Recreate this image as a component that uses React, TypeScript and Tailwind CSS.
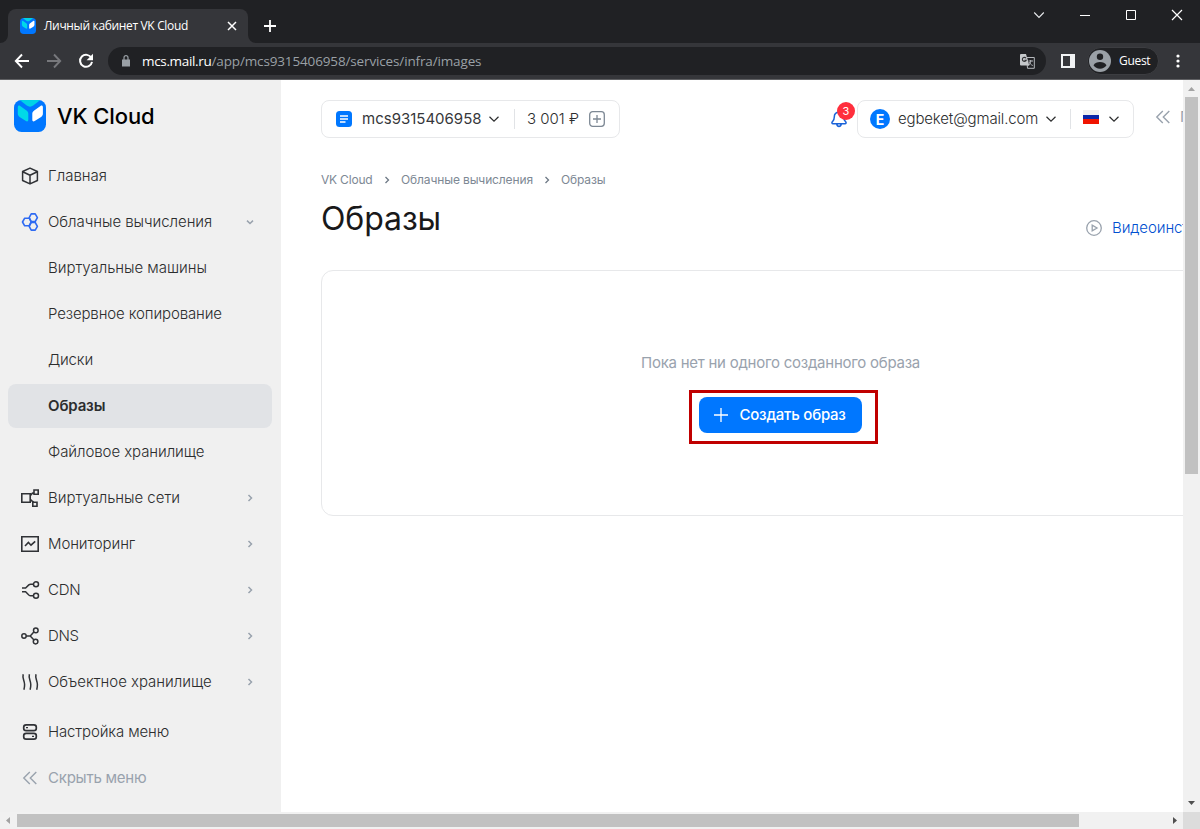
import React from "react";

type IconProps = { className?: string };

function Logo({ className }: IconProps) {
  return (
    <svg viewBox="0 0 32 32" className={className}>
      <rect width="32" height="32" rx="7.5" fill="#0077ff" />
      <path d="M6 .3C8 0 10 0 12 0h8c2 0 4 0 6 .3l-6.8 5.3c-2 1.500-4.400 1.500-6.400 0Z" fill="#00d3e6" />
      <path d="M3.800 7.200c0-1.600 1.300-2.100 2.400-1.200l6.300 4.400c1.200.9 1.800 1.900 1.800 3.200v6.200c0 1.600-1.200 2-2.400 1.200l-5.900-3.700c-1.500-1-2.200-2-2.200-3.700Z" fill="#00d9e8" />
      <path d="M28.900 7.200c0-1.600-1.300-2.100-2.400-1.200l-6.300 4.400c-1.200.9-1.900 1.900-1.900 3.200v6.200c0 1.600 1.200 2 2.400 1.200l6-3.700c1.500-1 2.200-2 2.200-3.700Z" fill="#fff" />
    </svg>
  );
}

function Chevron({ className }: IconProps) {
  return (
    <svg viewBox="0 0 12 12" fill="none" stroke="currentColor" strokeWidth="1.200" className={className}>
      <path d="M1.500 3.800 6 8.200l4.500-4.400" />
    </svg>
  );
}

function SmallChevron({ open }: { open?: boolean }) {
  return (
    <svg viewBox="0 0 16 16" fill="none" stroke="#99a2ad" strokeWidth="1.500" className="size-4">
      {open ? <path d="m5 6.600 3 2.900 3-2.900" /> : <path d="m6.500 5 3 3-3 3" />}
    </svg>
  );
}

function DoubleLeft({ className }: IconProps) {
  return (
    <svg viewBox="0 0 20 20" fill="none" stroke="#99a2ad" strokeWidth="1.400" className={className}>
      <path d="m9.800 4-6 6 6 6M16.300 4l-6 6 6 6" />
    </svg>
  );
}

function NavIcon({ name }: { name: string }) {
  const shapes: Record<string, React.ReactNode> = {
    cube: (
      <path d="M10 2.100 17.400 5.500v9L10 17.900l-7.400-3.400v-9ZM2.700 5.800 10 9.300l7.300-3.500M10 9.300v8.400" strokeLinejoin="round" strokeWidth="1.500" />
    ),
    hex: (
      <g stroke="#2f6bf2" strokeWidth="1.600" strokeLinejoin="round">
        <path d="M11.200 1.900h4l2.200 3.700-2.200 3.900h-4L9.200 5.600Z" />
        <path d="M11.200 10.500h4l2.200 3.800-2.200 3.800h-4l-2-3.800Z" />
        <path d="M9.200 6.200H4.700L2.500 10l2.200 3.800h4.500M9.200 13.600l2-3.600-2-3.800" />
      </g>
    ),
    nets: (
      <path d="M1.800 5.700h8.400v8.500H1.800ZM14 2h4.200v4.200H14ZM12.800 14.300H17v4h-4.200ZM10.200 7.600 12.400 5.200 14 4.800M10.200 11.300l2 1.800 1.600 1.100" strokeWidth="1.600" />
    ),
    monitor: <path d="M1.800 2.800h16.400v14.400H1.800ZM5 12l3.400-3.500 2.600 2.700 4.200-3.800" strokeWidth="1.600" />,
    cdn: (
      <>
        <circle cx="16" cy="4.200" r="2.500" />
        <circle cx="16" cy="15.800" r="2.500" />
        <path d="M2 8h3.600l3.200-3.100c.6-.5 1-.7 1.800-.7h2.900M2 11.800h3.600l3.200 3.200c.6.500 1 .8 1.800.8h2.900" />
      </>
    ),
    dns: (
      <>
        <circle cx="4" cy="10" r="2.200" />
        <circle cx="15.800" cy="4.400" r="2.300" />
        <circle cx="15.600" cy="15.600" r="2.300" />
        <path d="M6.200 10h4l3.900-4.200M10.200 10l3.800 4" />
      </>
    ),
    waves: (
      <path d="M3.200 2.200c-1.200 4.200 1.400 6.400 1.400 10.300 0 2.100-.2 3.600-.7 5.300M9.400 2.200c-1.200 4.200 1.400 6.400 1.400 10.300 0 2.100-.2 3.600-.7 5.300M16 2.200c-1.200 4.200 1.400 6.400 1.400 10.300 0 2.100-.2 3.600-.7 5.300" />
    ),
    settings: (
      <g strokeWidth="1.700">
        <rect x="3.700" y="2.800" width="12.600" height="5.900" rx="2.400" />
        <rect x="3.700" y="11.300" width="12.600" height="5.900" rx="2.400" />
        <path d="M6 5.700h2M12 14.400h2" strokeWidth="1.300" />
      </g>
    ),
  };
  return (
    <svg viewBox="0 0 20 20" fill="none" stroke="#303236" strokeWidth="1.500" className="size-5 shrink-0">
      {shapes[name]}
    </svg>
  );
}

type Item = { label: string; icon?: string; arrow?: "open" | "closed"; active?: boolean; tracking: string };

const items: Item[] = [
  { label: "Главная", icon: "cube", tracking: "" },
  { label: "Облачные вычисления", icon: "hex", arrow: "open", tracking: "tracking-[-0.050px]" },
  { label: "Виртуальные машины", tracking: "tracking-[-0.030px]" },
  { label: "Резервное копирование", tracking: "tracking-[-0.130px]" },
  { label: "Диски", tracking: "tracking-[-0.200px]" },
  { label: "Образы", active: true, tracking: "tracking-[-0.150px]" },
  { label: "Файловое хранилище", tracking: "tracking-[-0.080px]" },
  { label: "Виртуальные сети", icon: "nets", arrow: "closed", tracking: "tracking-[-0.030px]" },
  { label: "Мониторинг", icon: "monitor", arrow: "closed", tracking: "tracking-[-0.100px]" },
  { label: "CDN", icon: "cdn", arrow: "closed", tracking: "tracking-[-0.200px]" },
  { label: "DNS", icon: "dns", arrow: "closed", tracking: "tracking-[-0.300px]" },
  { label: "Объектное хранилище", icon: "waves", arrow: "closed", tracking: "tracking-[-0.030px]" },
];

function NavItem({ item }: { item: Item }) {
  return (
    <a
      className={
        "flex h-11 shrink-0 items-center gap-2 rounded-lg pl-3 pr-3.5 " +
        (item.active ? "bg-[#e1e3e6] font-semibold" : "font-light")
      }
    >
      {item.icon ? <NavIcon name={item.icon} /> : <span className="w-5" />}
      <span className={"flex-1 whitespace-nowrap " + item.tracking}>{item.label}</span>
      {item.arrow && <SmallChevron open={item.arrow === "open"} />}
    </a>
  );
}

function BrowserChrome() {
  return (
    <header className="flex h-20 shrink-0 flex-col border-b border-[#5f6063] bg-[#35363a] font-['Open_Sans',sans-serif] text-white">
      <div className="flex h-[43px] items-end bg-[#202124]">
        <svg viewBox="0 0 8 8" className="size-2"><path d="M8 0v8H0a8 8 0 0 0 8-8Z" fill="#35363a" /></svg>
        <div className="flex h-[34px] w-60 items-center rounded-t-lg bg-[#35363a] pl-3 pr-[11px]">
          <Logo className="size-4" />
          <span className="ml-2 flex-1 whitespace-nowrap text-[12px] tracking-[-0.340px]">Личный кабинет VK Cloud</span>
          <svg viewBox="0 0 10 10" className="size-2.5" stroke="#fff" strokeWidth="1.500"><path d="m1 1 8 8M9 1 1 9" /></svg>
        </div>
        <svg viewBox="0 0 8 8" className="size-2"><path d="M0 0v8h8a8 8 0 0 1-8-8Z" fill="#35363a" /></svg>
        <svg viewBox="0 0 12 12" className="mb-[11px] ml-2 size-3" stroke="#fff" strokeWidth="1.800"><path d="M6 0v12M0 6h12" /></svg>
        <div className="mb-[22px] ml-auto mr-[17px] flex items-center gap-9">
          <svg viewBox="0 0 12 12" className="-mr-px size-3" fill="none" stroke="#e8eaed" strokeWidth="1.100"><path d="m1.200 3.500 4.800 5 4.800-5" /></svg>
          <svg viewBox="0 0 10 10" className="size-2.5" stroke="#fff"><path d="M0 5.500h10" /></svg>
          <svg viewBox="0 0 10 10" className="size-2.5" fill="none" stroke="#fff"><path d="M.5.5h9v9h-9Z" /></svg>
          <svg viewBox="0 0 12 12" className="-ml-px size-3" stroke="#fff" strokeWidth="1.200"><path d="m1 1 10 10M11 1 1 11" /></svg>
        </div>
      </div>
      <div className="flex h-9 items-center pl-3.5">
        <svg viewBox="0 0 16 16" className="size-4" fill="none" stroke="#fff" strokeWidth="1.900"><path d="M15 8H2M8 1.500 1.800 8 8 14.500" /></svg>
        <svg viewBox="0 0 16 16" className="ml-4 size-4" fill="none" stroke="#77787c" strokeWidth="1.900"><path d="M1 8h13M8 1.500 14.200 8 8 14.500" /></svg>
        <svg viewBox="0 0 16 16" className="ml-4 size-4" fill="none" stroke="#fff" strokeWidth="2"><path d="M13.400 5A6 6 0 1 0 14 8.900" /><path d="M15 .8v6.400H8.600Z" fill="#fff" stroke="none" /></svg>
        <div className="ml-3.5 flex h-7 w-[938px] items-center rounded-full bg-[#202124] pl-3.5 pr-[11px]">
          <svg viewBox="0 0 8 12" className="h-3 w-2" fill="none" stroke="#9aa0a6"><path d="M0 4.500h8V11.500H0Z" fill="#9aa0a6" stroke="none" /><path d="M2 5V2.700a2 2 0 0 1 4 0V5" strokeWidth="1.200" /></svg>
          <span className="ml-3 flex-1 whitespace-nowrap text-[13.500px] tracking-[-0.140px] text-[#9aa0a6]">
            <span className="tracking-[-0.330px] text-white">mcs.mail.ru</span>/app/mcs9315406958/services/infra/images
          </span>
          <svg viewBox="0 0 15 15" className="size-[15px]" fill="none">
            <path d="M6.500 3.500h7.800v10.800H7.500Z" stroke="#b5b8bc" />
            <path d="M8.500 7h4.500M10.700 6v1c0 2-1 3.500-2.200 4.500M9 8c.8 1.600 2 2.800 3.800 3.500" stroke="#b5b8bc" />
            <path d="M1 0h5l3.300 11.500H1a1 1 0 0 1-1-1V1a1 1 0 0 1 1-1Z" fill="#c4c7ca" />
            <path d="M6 4.200a2 2 0 1 0 .2 2H4.500" stroke="#303134" strokeWidth="1.100" />
          </svg>
        </div>
        <svg viewBox="0 0 14 14" className="ml-[15px] size-3.5"><path d="M0 0h14v14H0ZM2 2v10h7V2Z" fill="#f1f3f4" fillRule="evenodd" /></svg>
        <div className="ml-3 flex h-7 w-[72px] items-center rounded-full border border-[#3c3d41] bg-[#202124] pl-px">
          <svg viewBox="0 0 22 22" className="size-[22px]"><circle cx="11" cy="11" r="11" fill="#9aa0a6" /><circle cx="11" cy="6.700" r="3.200" fill="#202124" /><path d="M4.500 15.200c1.300-2.200 3.700-3.300 6.500-3.300s5.200 1.100 6.500 3.300c-1.500 2.200-3.700 3.500-6.500 3.500s-5-1.300-6.500-3.500Z" fill="#202124" /></svg>
          <span className="ml-2 text-[12px] tracking-[-0.300px]">Guest</span>
        </div>
        <svg viewBox="0 0 4 14" className="ml-[17px] h-3.5 w-1" fill="#fff"><circle cx="2" cy="2" r="1.600" /><circle cx="2" cy="7" r="1.600" /><circle cx="2" cy="12" r="1.600" /></svg>
      </div>
    </header>
  );
}

function Sidebar() {
  return (
    <aside className="flex w-[281px] shrink-0 flex-col bg-[#f0f0f0] px-2 pt-5 text-[15px] text-[#2c2d2e]">
      <div className="flex h-8 items-center pl-1.5">
        <Logo className="size-8" />
        <span className="ml-[11px] whitespace-nowrap text-[22px] font-medium tracking-[-0.100px] text-black">VK Cloud</span>
      </div>
      <nav className="mt-[22px] flex w-[264px] flex-col gap-0.5">
        {items.map((item) => (
          <NavItem key={item.label} item={item} />
        ))}
      </nav>
      <div className="mt-1.5 flex w-[264px] flex-col gap-0.5 font-light">
        <a className="flex h-11 items-center gap-2 pl-3">
          <NavIcon name="settings" />
          <span className="tracking-[-0.130px]">Настройка меню</span>
        </a>
        <a className="flex h-11 items-center gap-2 pl-3 font-normal text-[#99a2ad]">
          <DoubleLeft className="size-5" />
          <span className="tracking-[-0.230px]">Скрыть меню</span>
        </a>
      </div>
    </aside>
  );
}

function TopBar() {
  return (
    <div className="flex h-[38px] items-center whitespace-nowrap text-[15px] text-[#2c2d2e]">
      <div className="flex h-[38px] w-[299px] shrink-0 items-center rounded-lg border border-[#e7e8ea] pl-3.5">
        <svg viewBox="0 0 16 16" className="size-4"><rect width="16" height="16" rx="3.500" fill="#0077ff" /><path d="M4 5h8M4 8h8M4 11h5.500" stroke="#fff" strokeWidth="1.300" /></svg>
        <span className="ml-2.5 w-[126px] text-[#36373a]">mcs9315406958</span>
        <Chevron className="size-3" />
        <span className="ml-3.5 h-5 w-px bg-[#e1e3e6]" />
        <span className="ml-3 w-[62px] font-light">3 001 ₽</span>
        <svg viewBox="0 0 16 16" className="size-4" fill="none" stroke="#7d8894" strokeWidth="1.300"><rect x=".7" y=".7" width="14.600" height="14.600" rx="3" /><path d="M8 4v8M4 8h8" /></svg>
      </div>
      <div className="relative ml-[210px] size-[18px] shrink-0">
        <svg viewBox="0 0 18 18" className="size-[18px]" fill="none" stroke="#1a63d9" strokeWidth="1.500" strokeLinejoin="round"><path d="M9 2.200c-3 0-4.700 2.200-4.700 4.800 0 3-1 3.700-2 4.800-.8 1-.3 1.900.7 1.900h12c1 0 1.500-.9.700-1.900-1-1.100-2-1.800-2-4.800 0-2.600-1.700-4.800-4.700-4.800ZM6.700 14c.3 1.500 1.200 2.400 2.300 2.400s2-.9 2.300-2.400" /></svg>
        <span className="absolute -top-2 left-[7px] flex size-[18px] items-center justify-center rounded-full bg-[#ff2f3d] text-[11px] text-white">3</span>
      </div>
      <div className="ml-[9px] flex h-[38px] w-[277px] shrink-0 items-center rounded-lg border border-[#e7e8ea] pl-3">
        <span className="flex size-5 items-center justify-center rounded-full bg-[#0077ff] text-[14px] font-bold text-white">E</span>
        <span className="ml-2 w-[147px] font-light tracking-[-0.150px]">egbeket@gmail.com</span>
        <Chevron className="size-3" />
        <span className="ml-[13px] h-5 w-px bg-[#e1e3e6]" />
        <span className="mb-1 ml-3 flex h-3.5 w-4 flex-col"><span className="h-[5px] bg-[#f0f0f0]" /><span className="h-1 bg-[#0a26a8]" /><span className="h-[5px] bg-[#f01400]" /></span>
        <Chevron className="ml-[9px] size-3" />
      </div>
      <DoubleLeft className="-mt-1 ml-[19px] size-5 shrink-0" />
      <span className="-mt-1 ml-[7px] text-[15px] text-[#99a2ad]">Помощь</span>
    </div>
  );
}

function CrumbArrow() {
  return (
    <svg viewBox="0 0 8 8" className="size-2" fill="none" stroke="#6d7885" strokeWidth="1.300"><path d="m2.500 1 3 3-3 3" /></svg>
  );
}

function Page() {
  return (
    <main className="min-w-0 flex-1 overflow-hidden bg-white pl-10 pt-5">
      <div className="flex w-[919px] flex-col">
        <TopBar />
        <div className="mt-8 flex h-5 items-center whitespace-nowrap text-[12px] tracking-[-0.130px] text-[#7d8894]">
          <span className="w-[62px] tracking-[-0.200px]">VK Cloud</span>
          <CrumbArrow />
          <span className="ml-2.5 w-[142px]">Облачные вычисления</span>
          <CrumbArrow />
          <span className="ml-2.5">Образы</span>
        </div>
        <div className="flex h-20 items-start justify-between">
          <h1 className="mt-[7px] text-[32px] leading-[44px] tracking-[-0.100px] text-[#19191a]">Образы</h1>
          <a className="mt-[27px] flex w-[154px] items-center whitespace-nowrap text-[15px] leading-[22px] font-light tracking-[-0.100px] text-[#0050d0]">
            <svg viewBox="0 0 16 16" className="mr-[10px] size-4 shrink-0" fill="none" stroke="#99a2ad" strokeWidth="1.300"><circle cx="8" cy="8" r="7.300" /><path d="M6.200 5.200v5.600L11 8Z" /></svg>
            Видеоинструкция
          </a>
        </div>
        <section className="flex h-[246px] flex-col items-center rounded-xl border border-[#e7e8ea] pt-[81px] text-[15px]">
          <p className="leading-[22px] tracking-[-0.250px] text-[#99a2ad]">Пока нет ни одного созданного образа</p>
          <div className="relative mt-[23px]">
            <button className="flex h-9 w-[163px] items-center rounded-lg bg-[#0077ff] pl-[15px] font-medium tracking-[-0.230px] whitespace-nowrap text-white">
              <svg viewBox="0 0 14 14" className="mr-[11.500px] size-3.5 shrink-0" stroke="#fff" strokeWidth="1.300"><path d="M7 0v14M0 7h14" /></svg>
              Создать образ
            </button>
            <span className="absolute -left-[10px] -top-[7px] h-[54px] w-[189px] border-[3px] border-[#c00000]" />
          </div>
        </section>
      </div>
    </main>
  );
}

export default function App() {
  return (
    <div className="flex h-[829px] w-[1200px] flex-col overflow-hidden bg-white font-['Inter',sans-serif]">
      <BrowserChrome />
      <div className="flex min-h-0 flex-1">
        <Sidebar />
        <Page />
        <div className="flex w-[17px] shrink-0 flex-col items-center bg-[#f1f1f1]">
          <svg viewBox="0 0 17 17" className="size-[17px]"><path d="M5 11h7L8.500 7Z" fill="#a3a3a3" /></svg>
          <div className="h-[377px] w-[13px] bg-[#c1c1c1]" />
          <svg viewBox="0 0 17 17" className="mt-auto size-[17px]"><path d="M5 6h7l-3.500 4Z" fill="#505050" /></svg>
        </div>
      </div>
      <div className="flex h-[17px] shrink-0 items-center bg-[#f1f1f1]">
        <svg viewBox="0 0 17 17" className="size-[17px]"><path d="M10 5v7L6 8.500Z" fill="#a3a3a3" /></svg>
        <div className="h-[13px] w-[1062px] bg-[#c1c1c1]" />
        <svg viewBox="0 0 17 17" className="ml-auto size-[17px]"><path d="M7 5v7l4-3.500Z" fill="#505050" /></svg>
        <div className="size-[17px] bg-[#dcdcdc]" />
      </div>
    </div>
  );
}
